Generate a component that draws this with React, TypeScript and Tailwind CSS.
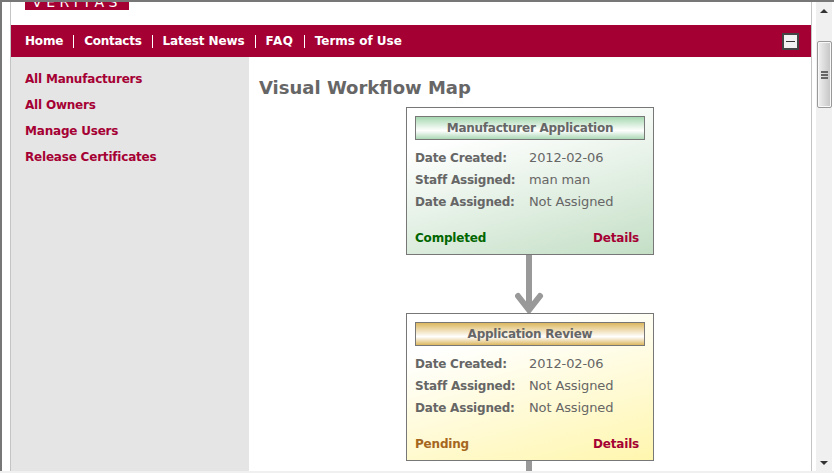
import React from 'react';

const font = { fontFamily: '"DejaVu Sans", sans-serif' };

function Row({ label, value }: { label: string; value: string }) {
  return (
    <div className="flex h-[22px] items-center text-[#666]">
      <span className="w-[114px] text-[12px] font-bold tracking-[-0.2px]">{label}</span>
      <span className="text-[13px] tracking-[-0.12px]">{value}</span>
    </div>
  );
}

function Card({ title, staff, status, variant }: { title: string; staff: string; status: string; variant: 'green' | 'yellow' }) {
  const green = variant === 'green';
  return (
    <div className={`mx-auto h-[148px] w-[248px] border border-[#777] px-2 pt-2 ${green ? 'bg-[linear-gradient(165deg,#ffffff_20%,#c4dfc6_100%)]' : 'bg-[linear-gradient(165deg,#ffffff_20%,#fff6ae_100%)]'}`}>
      <div className={`flex h-[24px] items-center justify-center border border-[#777] text-[12px] font-bold tracking-[-0.25px] text-[#666] ${green ? 'bg-[linear-gradient(180deg,#a6d8b0_0%,#ffffff_62%,#acd8b6_100%)]' : 'bg-[linear-gradient(180deg,#dcb75f_0%,#ffffff_62%,#dcb75f_100%)]'}`}>
        {title}
      </div>
      <div className="mt-[7px]">
        <Row label="Date Created:" value="2012-02-06" />
        <Row label="Staff Assigned:" value={staff} />
        <Row label="Date Assigned:" value="Not Assigned" />
      </div>
      <div className="mt-[16px] flex items-center justify-between pr-[6px] text-[12px] font-bold tracking-[-0.2px]">
        <span className={green ? 'text-[#006600]' : 'text-[#a5661e]'}>{status}</span>
        <span className="text-[#a50034]">Details</span>
      </div>
    </div>
  );
}

function Arrow() {
  return (
    <svg className="mx-auto block" width="30" height="58" viewBox="0 0 30 58">
      <path d="M14 0V56" stroke="#999" strokeWidth="6" fill="none" />
      <path d="M3 41L14 55L25 41" stroke="#999" strokeWidth="6" strokeLinecap="round" fill="none" />
    </svg>
  );
}

const navItems = [
  { label: 'Home', track: 'tracking-[-0.2px]' },
  { label: 'Contacts', track: 'tracking-[-0.25px]' },
  { label: 'Latest News', track: 'tracking-[-0.1px]' },
  { label: 'FAQ', track: 'tracking-[0.6px]' },
  { label: 'Terms of Use', track: 'tracking-[0px]' },
];
const sideItems = ['All Manufacturers', 'All Owners', 'Manage Users', 'Release Certificates'];

export default function App() {
  return (
    <div style={font} className="h-[473px] w-[834px] overflow-hidden bg-[#f0f0f0]">
      <div className="flex h-[471px] border-t-2 border-l-2 border-[#777] bg-white">
        <div className="flex h-full min-w-0 flex-1 pl-2">
          {/* page */}
          <div className="h-full w-[802px] overflow-hidden border-x border-[#c4c4c4]">
            <div className="-mt-[2px] h-[25px] pl-[14px]">
              <div className="flex h-[10px] w-[104px] items-end justify-center overflow-hidden bg-[#a50034] text-[14px] leading-[14px] tracking-[4.5px] text-white">
                <span className="mb-[1px]">VERITAS</span>
              </div>
            </div>

            <div className="flex h-[32px] items-center bg-[#a50034] pl-[14px] pr-[12px] text-[12px] font-bold text-white">
              {navItems.map((item, i) => (
                <span key={item.label} className={`${item.track} ${i > 0 ? 'ml-[10px] border-l border-white pl-[10px] leading-[13px]' : 'leading-[13px]'}`}>
                  {item.label}
                </span>
              ))}
              <span className="ml-auto flex h-[17px] w-[17px] items-center justify-center border-2 border-[#444] bg-[#f2f2f2]">
                <span className="h-[1px] w-[9px] bg-[#333]" />
              </span>
            </div>

            <div className="flex h-[420px]">
              <div className="w-[238px] bg-[#e5e5e5] pl-[14px] pt-[9px] text-[12px] font-bold tracking-[-0.2px] text-[#a50034]">
                {sideItems.map((item) => (
                  <div key={item} className="flex h-[26px] items-center">{item}</div>
                ))}
              </div>
              <div className="flex-1 px-[10px] pt-[18px]">
                <h1 className="h-[32px] text-[18px] font-bold leading-[26px] text-[#666]">Visual Workflow Map</h1>
                <Card title="Manufacturer Application" staff="man man" status="Completed" variant="green" />
                <Arrow />
                <Card title="Application Review" staff="Not Assigned" status="Pending" variant="yellow" />
                <div className="mx-auto h-[12px] w-[6px] -translate-x-px bg-[#999]" />
              </div>
            </div>
          </div>
        </div>

        {/* scrollbar */}
        <div className="flex h-full w-[22px] flex-col items-center bg-white pl-[4px] pr-[2px]">
          <div className="flex h-full w-full flex-col items-center bg-[#f0f0f0]">
            <div className="mt-[7px] h-0 w-0 border-x-[4px] border-b-[4px] border-x-transparent border-b-[#333]" />
            <div className="mt-[28px] flex h-[67px] w-[15px] flex-col items-center justify-center gap-[1px] rounded-[2px] border border-[#999] bg-[linear-gradient(90deg,#f0f0f0,#c4c4c4)] shadow-[inset_0_0_0_1px_#f8f8f8]">
              <span className="h-[2px] w-[7px] bg-[#666]" />
              <span className="h-[2px] w-[7px] bg-[#666]" />
              <span className="h-[2px] w-[7px] bg-[#666]" />
            </div>
            <div className="mb-[6px] mt-auto h-0 w-0 border-x-[4px] border-t-[4px] border-x-transparent border-t-[#333]" />
          </div>
        </div>
      </div>
    </div>
  );
}
